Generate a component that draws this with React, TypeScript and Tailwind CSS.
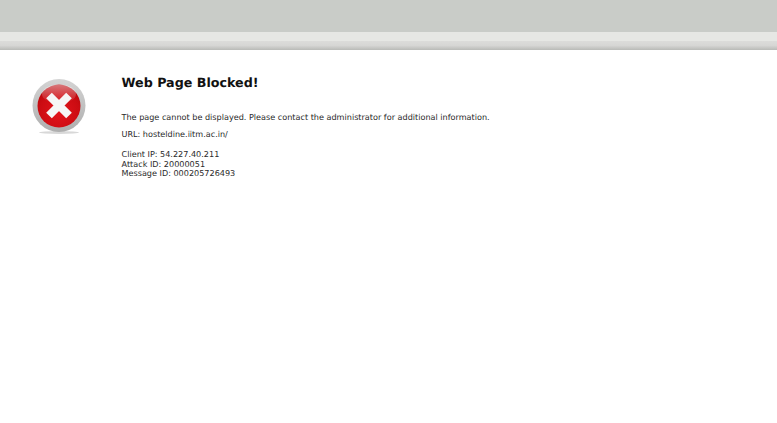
export default function App() {
  return (
    <div className="min-h-[423px] bg-white font-['DejaVu_Sans',sans-serif] text-[#2a2a2a] [text-rendering:geometricPrecision]">
      <div className="h-[32px] bg-[#c9ccc8]" />
      <div className="h-[9px] bg-[#e6e7e4]" />
      <div className="h-[9px] bg-gradient-to-b from-[#dcdcda] via-[#d6d6d4] to-[#b9bab7]" />
      <div className="flex pt-[25px]">
        <div className="w-[121.5px] pl-[31px] pt-[4px] shrink-0">
          <svg width="56" height="56" viewBox="0 0 56 56">
            <defs>
              <linearGradient id="ring" x1="0" y1="0" x2="0" y2="1">
                <stop offset="0" stopColor="#d4d4d4" />
                <stop offset="1" stopColor="#aeaeae" />
              </linearGradient>
              <radialGradient id="red" cx="0.5" cy="0.65" r="0.65">
                <stop offset="0" stopColor="#e2141c" />
                <stop offset="0.7" stopColor="#cc0c12" />
                <stop offset="1" stopColor="#b8080d" />
              </radialGradient>
              <linearGradient id="shine" x1="0" y1="0" x2="0" y2="1">
                <stop offset="0" stopColor="#ffffff" stopOpacity="0.45" />
                <stop offset="1" stopColor="#ffffff" stopOpacity="0" />
              </linearGradient>
            </defs>
            <ellipse cx="28" cy="53.5" rx="20" ry="1.5" fill="#d8d8d8" />
            <circle cx="28" cy="26.5" r="26.5" fill="url(#ring)" />
            <circle cx="28" cy="27" r="21.5" fill="url(#red)" />
            <ellipse cx="28" cy="15" rx="17" ry="9.5" fill="url(#shine)" />
            <path d="M18 16.5L38 36.5M38 16.5L18 36.5" stroke="#f6f6f6" strokeWidth="8" />
          </svg>
        </div>
        <div className="flex flex-col">
          <h1 className="text-[12.7px] leading-[16px] font-bold text-[#111]">Web Page Blocked!</h1>
          <p className="text-[8.1px] leading-[10px] mt-[21px]">The page cannot be displayed. Please contact the administrator for additional information.</p>
          <p className="text-[8.1px] leading-[10px] mt-[6.5px]">URL: hosteldine.iitm.ac.in/</p>
          <div className="text-[8.1px] leading-[9.6px] mt-[11.5px]">
            <p>Client IP: 54.227.40.211</p>
            <p>Attack ID: 20000051</p>
            <p>Message ID: 000205726493</p>
          </div>
        </div>
      </div>
    </div>
  );
}
